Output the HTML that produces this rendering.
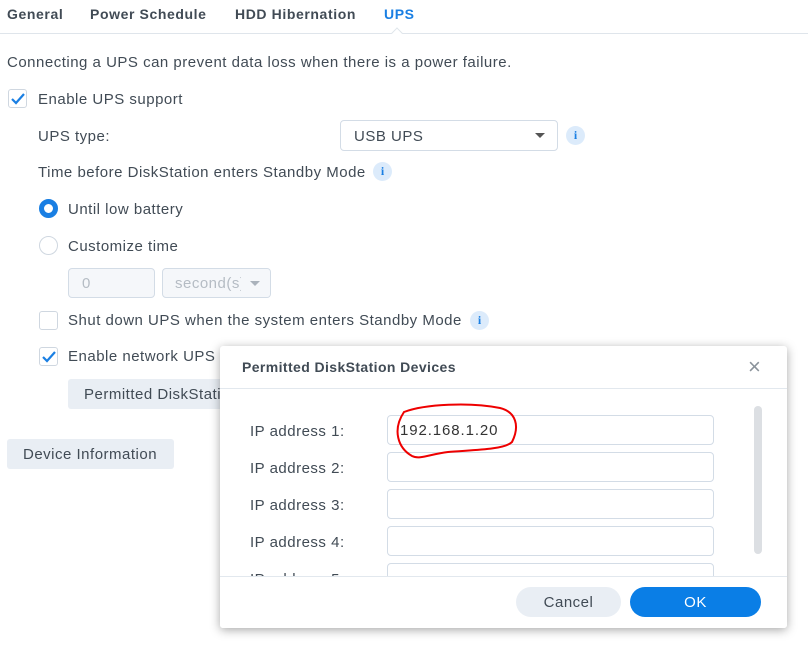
<!DOCTYPE html>
<html><head><meta charset="utf-8"><style>
*{box-sizing:border-box;margin:0;padding:0}
body{width:808px;height:651px;background:#fff;font-family:"Liberation Sans",sans-serif;color:#414b55;font-size:15px;letter-spacing:0.5px;position:relative;overflow:hidden}
.a{position:absolute;white-space:nowrap}
.tab{font-weight:bold;font-size:14px;top:6px;letter-spacing:0.6px}
.cb{position:absolute;width:19px;height:19px;border:1px solid #cfd7e0;border-radius:3px;background:#fff}
.rd{position:absolute;width:19px;height:19px;border:1px solid #cfd7e0;border-radius:50%;background:#fff}
.info{position:absolute;width:19px;height:19px;border-radius:50%;background:#dcebfb;color:#1a7fe3;font-size:12px;font-weight:bold;text-align:center;line-height:19px;font-family:"Liberation Serif",serif;letter-spacing:0}
.inp{position:absolute;border:1px solid #d3dce6;border-radius:4px;background:#fff}
.btn{position:absolute;background:#e9eef4;border-radius:3px;height:30px;line-height:31px;padding-left:16px;color:#414b55;white-space:nowrap;overflow:hidden}
</style></head><body>
<div class="a tab" style="left:7px">General</div>
<div class="a tab" style="left:90px">Power Schedule</div>
<div class="a tab" style="left:235px">HDD Hibernation</div>
<div class="a tab" style="left:384px;color:#1a7fe3">UPS</div>
<div class="a" style="left:0;top:33px;width:808px;height:1px;background:#dfe5eb"></div>
<div class="a" style="left:393px;top:29px;width:8px;height:8px;background:#fff;border-left:1px solid #dfe5eb;border-top:1px solid #dfe5eb;transform:rotate(45deg)"></div>

<div class="a" style="left:7px;top:54px">Connecting a UPS can prevent data loss when there is a power failure.</div>
<div class="cb" style="left:8px;top:89px"><svg width="17" height="17"><path d="M3 9l4 4 8-9" stroke="#1a7fe3" stroke-width="2.2" fill="none"/></svg></div>
<div class="a" style="left:38px;top:91px">Enable UPS support</div>
<div class="a" style="left:38px;top:128px">UPS type:</div>
<div class="inp" style="left:340px;top:120px;width:218px;height:31px"><span class="a" style="left:13px;top:7px">USB UPS</span><span class="a" style="left:194px;top:12px;border:5px solid transparent;border-top:5px solid #555;border-bottom:0"></span></div>
<div class="info" style="left:566px;top:126px">i</div>
<div class="a" style="left:38px;top:164px">Time before DiskStation enters Standby Mode</div>
<div class="info" style="left:373px;top:162px">i</div>
<div class="rd" style="left:39px;top:199px;border:5px solid #1a7fe3"></div>
<div class="a" style="left:68px;top:201px">Until low battery</div>
<div class="rd" style="left:39px;top:236px"></div>
<div class="a" style="left:68px;top:238px">Customize time</div>
<div class="inp" style="left:68px;top:268px;width:87px;height:30px;background:#f5f7fa"><span class="a" style="left:13px;top:6px;color:#b5bcc4">0</span></div>
<div class="inp" style="left:162px;top:268px;width:109px;height:30px;background:#f5f7fa;overflow:hidden"><span class="a" style="left:12px;top:6px;color:#b5bcc4">second(s)</span><span class="a" style="left:78px;top:0;width:30px;height:28px;background:#f5f7fa"></span><span class="a" style="left:87px;top:12px;border:5px solid transparent;border-top:5px solid #aab2bb;border-bottom:0"></span></div>
<div class="cb" style="left:39px;top:311px"></div>
<div class="a" style="left:68px;top:312px">Shut down UPS when the system enters Standby Mode</div>
<div class="info" style="left:470px;top:311px">i</div>
<div class="cb" style="left:39px;top:347px"><svg width="17" height="17"><path d="M3 9l4 4 8-9" stroke="#1a7fe3" stroke-width="2.2" fill="none"/></svg></div>
<div class="a" style="left:68px;top:348px">Enable network UPS server</div>
<div class="btn" style="left:68px;top:379px;width:200px">Permitted DiskStation Devices</div>
<div class="btn" style="left:7px;top:439px;width:167px">Device Information</div>

<div class="a" style="left:220px;top:346px;width:567px;height:282px;background:#fff;border-radius:3px;box-shadow:0 2px 10px rgba(0,0,0,0.35);overflow:hidden">
<div class="a" style="left:22px;top:13px;font-weight:bold;font-size:14px;letter-spacing:0.4px">Permitted DiskStation Devices</div>
<div class="a" style="left:528px;top:8px;font-size:22px;color:#8a929a">×</div>
<div class="a" style="left:0;top:42px;width:567px;height:1px;background:#e2e8ee"></div>
<div class="a" style="left:30px;top:77px">IP address 1:</div>
<div class="a" style="left:30px;top:114px">IP address 2:</div>
<div class="a" style="left:30px;top:151px">IP address 3:</div>
<div class="a" style="left:30px;top:188px">IP address 4:</div>
<div class="a" style="left:30px;top:225px">IP address 5:</div>
<div class="inp" style="left:167px;top:69px;width:327px;height:30px"><span class="a" style="left:12px;top:6px;color:#333;letter-spacing:0.9px">192.168.1.20</span></div>
<div class="inp" style="left:167px;top:106px;width:327px;height:30px"></div>
<div class="inp" style="left:167px;top:143px;width:327px;height:30px"></div>
<div class="inp" style="left:167px;top:180px;width:327px;height:30px"></div>
<div class="inp" style="left:167px;top:217px;width:327px;height:30px"></div>
<div class="a" style="left:534px;top:60px;width:8px;height:148px;background:#dcdfe3;border-radius:4px"></div>
<div class="a" style="left:0;top:230px;width:567px;height:52px;background:#fff;border-top:1px solid #e2e8ee"></div>
<div class="a" style="left:296px;top:241px;width:105px;height:30px;background:#e9eef4;border-radius:15px;text-align:center;line-height:32px">Cancel</div>
<div class="a" style="left:410px;top:241px;width:131px;height:30px;background:#0a7ee6;border-radius:15px;text-align:center;line-height:32px;color:#fff">OK</div>
<svg class="a" style="left:0;top:0" width="567" height="230"><path d="M184 66C205 58 250 56 280 62 296 66 300 80 292 96 284 104 250 104 228 106 210 108 200 114 192 110 178 102 172 84 184 66Z" stroke="#e00" stroke-width="2" fill="none"/></svg>
</div>
</body></html>
